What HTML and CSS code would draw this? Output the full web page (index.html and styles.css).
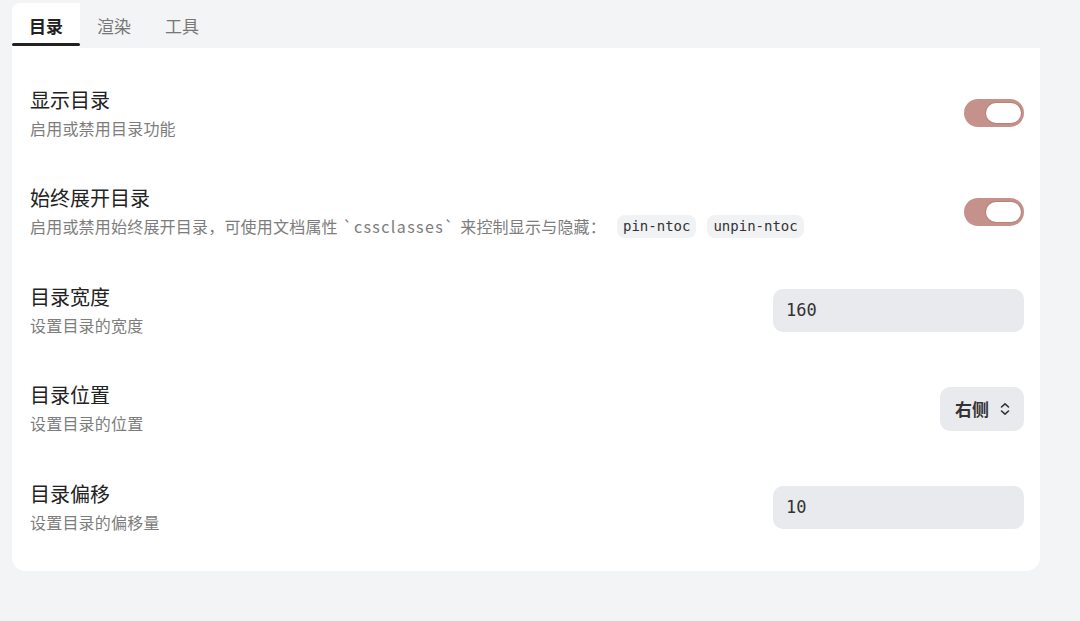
FILE: index.html
```html
<!DOCTYPE html>
<html lang="zh-CN">
<head>
    <meta charset="UTF-8">
    <meta name="viewport" content="width=device-width, initial-scale=1.0">
    <title>目录设置</title>
    <link rel="stylesheet" href="styles.css">
</head>
<body>
    <div class="page">
        <nav class="tabs">
            <div class="tab active">目录</div>
            <div class="tab">渲染</div>
            <div class="tab">工具</div>
        </nav>

        <div class="card">
            <div class="setting">
                <div class="setting-info">
                    <div class="setting-name">显示目录</div>
                    <div class="setting-desc">启用或禁用目录功能</div>
                </div>
                <div class="toggle on"><span class="knob"></span></div>
            </div>

            <div class="setting">
                <div class="setting-info">
                    <div class="setting-name">始终展开目录</div>
                    <div class="setting-desc">启用或禁用始终展开目录，可使用文档属性 <span class="tick">`cssclasses`</span> 来控制显示与隐藏：<code class="chip">pin-ntoc</code><code class="chip">unpin-ntoc</code></div>
                </div>
                <div class="toggle on"><span class="knob"></span></div>
            </div>

            <div class="setting">
                <div class="setting-info">
                    <div class="setting-name">目录宽度</div>
                    <div class="setting-desc">设置目录的宽度</div>
                </div>
                <input class="text-input" type="text" value="160">
            </div>

            <div class="setting">
                <div class="setting-info">
                    <div class="setting-name">目录位置</div>
                    <div class="setting-desc">设置目录的位置</div>
                </div>
                <div class="dropdown">
                    <span>右侧</span>
                    <svg width="12" height="14" viewBox="0 0 12 14" fill="none" stroke="#333" stroke-width="1.6" stroke-linecap="round" stroke-linejoin="round">
                        <path d="M2.5 5 L6 1.8 L9.5 5"/>
                        <path d="M2.5 9 L6 12.2 L9.5 9"/>
                    </svg>
                </div>
            </div>

            <div class="setting">
                <div class="setting-info">
                    <div class="setting-name">目录偏移</div>
                    <div class="setting-desc">设置目录的偏移量</div>
                </div>
                <input class="text-input" type="text" value="10">
            </div>
        </div>
    </div>
</body>
</html>
```

FILE: styles.css
```css
body {
    margin: 0;
    padding: 0;
    background-color: #f3f4f6;
    font-family: "Noto Sans CJK SC", "Noto Sans", sans-serif;
    color: #222;
}

.page {
    width: 1028px;
    padding: 3px 0 0 12px;
}

.tabs {
    display: flex;
    height: 45px;
}

.tab {
    position: relative;
    width: 68px;
    display: flex;
    align-items: center;
    justify-content: center;
    font-size: 17px;
    color: #777;
}

.tab.active {
    background-color: #fff;
    color: #222;
    font-weight: 600;
    border-radius: 8px 0 0 0;
}

.tab.active::after {
    content: "";
    position: absolute;
    left: 0;
    right: 0;
    bottom: 2px;
    height: 3px;
    border-radius: 2px;
    background-color: #222;
}

.card {
    background-color: #fff;
    border-radius: 0 0 14px 14px;
    padding: 16px 16px 14px 18px;
}

.setting {
    height: 98.5px;
    display: flex;
    align-items: center;
    justify-content: space-between;
}

.setting-name {
    font-size: 20px;
    line-height: 26px;
    color: #222;
}

.setting-desc {
    margin-top: 3px;
    font-size: 16px;
    line-height: 24px;
    letter-spacing: 0.2px;
    color: #7d7d7d;
    display: flex;
    align-items: center;
}

.tick {
    letter-spacing: 1.4px;
    margin: 0 5px;
}

.chip {
    font-family: "DejaVu Sans Mono", monospace;
    font-size: 14px;
    line-height: 23px;
    letter-spacing: 0;
    color: #333;
    background-color: #f1f2f4;
    border-radius: 8px;
    padding: 0 6px;
    margin-left: 11px;
}

.toggle {
    width: 60px;
    height: 28px;
    box-sizing: border-box;
    padding: 4px 3px;
    border-radius: 14px;
    background-color: #c4928a;
    display: flex;
    justify-content: flex-end;
}

.knob {
    width: 35px;
    height: 20px;
    border-radius: 10px;
    background-color: #fff;
    box-shadow: 0 0 0 1px #b98279;
}

.text-input {
    width: 251px;
    height: 43px;
    box-sizing: border-box;
    border: none;
    border-radius: 10px;
    background-color: #e8eaed;
    padding: 0 13px;
    font-family: "DejaVu Sans Mono", monospace;
    font-size: 17px;
    color: #333;
    outline: none;
}

.dropdown {
    width: 84px;
    height: 44px;
    box-sizing: border-box;
    border-radius: 10px;
    background-color: #e8eaed;
    display: flex;
    align-items: center;
    gap: 10px;
    padding-left: 15px;
    font-size: 17px;
    font-weight: 600;
    color: #333;
}
```
